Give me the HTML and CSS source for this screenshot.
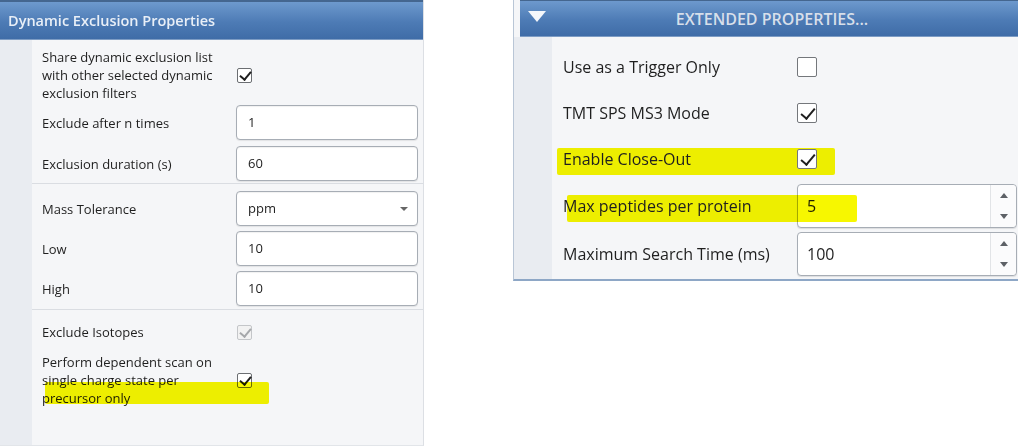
FILE: index.html
```html
<!DOCTYPE html>
<html lang="en">
<head>
  <meta charset="UTF-8" />
  <title>Dynamic Exclusion / Extended Properties</title>
  <link rel="stylesheet" href="styles.css">
</head>
<body>

  <div class="panel panel-left">
    <div class="panel-head">Dynamic Exclusion Properties</div>
    <div class="panel-body">
      <div class="strip"></div>
      <div class="content">

        <div class="section sec-1">
          <div class="row row-share">
            <label>Share dynamic exclusion list with other selected dynamic exclusion filters</label>
            <span class="check on"></span>
          </div>
          <div class="row">
            <label>Exclude after n times</label>
            <div class="field">1</div>
          </div>
          <div class="row">
            <label>Exclusion duration (s)</label>
            <div class="field">60</div>
          </div>
        </div>

        <div class="section sec-2">
          <div class="row">
            <label>Mass Tolerance</label>
            <div class="field select"><span class="sel-val">ppm</span><span class="caret"></span></div>
          </div>
          <div class="row">
            <label>Low</label>
            <div class="field">10</div>
          </div>
          <div class="row">
            <label>High</label>
            <div class="field">10</div>
          </div>
        </div>

        <div class="section sec-3">
          <div class="row row-iso">
            <label>Exclude Isotopes</label>
            <span class="check on disabled"></span>
          </div>
          <div class="row row-perform">
            <label>Perform dependent scan on single charge state per precursor only</label>
            <span class="check on"></span>
            <span class="marker mark-perform"></span>
          </div>
        </div>

      </div>
    </div>
  </div>

  <div class="panel panel-right">
    <div class="panel-head head-ext">
      <span class="tri"></span>
      <span class="head-title">EXTENDED PROPERTIES...</span>
    </div>
    <div class="panel-body">
      <div class="strip"></div>
      <div class="content">
        <div class="xrow">
          <label>Use as a Trigger Only</label>
          <span class="check big"></span>
        </div>
        <div class="xrow">
          <label>TMT SPS MS3 Mode</label>
          <span class="check big on"></span>
        </div>
        <div class="xrow">
          <span class="marker mark-close"></span>
          <label>Enable Close-Out</label>
          <span class="check big on"></span>
        </div>
        <div class="xrow spin-row">
          <span class="marker mark-max"></span>
          <label>Max peptides per protein</label>
          <div class="spin">
            <span class="spin-val">5</span>
            <span class="spin-btns"><i class="up"></i><i class="down"></i></span>
          </div>
        </div>
        <div class="xrow spin-row">
          <label>Maximum Search Time (ms)</label>
          <div class="spin">
            <span class="spin-val">100</span>
            <span class="spin-btns"><i class="up"></i><i class="down"></i></span>
          </div>
        </div>
      </div>
    </div>
  </div>

</body>
</html>
```

FILE: styles.css
```css
* { box-sizing: border-box; }
body {
  margin: 0;
  background: #fff;
  font-family: 'Open Sans', 'Noto Sans', sans-serif;
  color: #1f1f1f;
  display: flex;
  align-items: flex-start;
  width: 1022px;
  height: 448px;
  overflow: hidden;
}
.panel { background: #f5f6f8; display: flex; flex-direction: column; flex: none; }
.panel-head {
  background: linear-gradient(#6d99cd, #4d7bb5 55%, #3f6ca7);
  border-top: 2px solid #44668f;
  border-bottom: 1px solid #7d9cc4;
  color: #e9eff7;
  font-weight: 600;
}
.panel-body { display: flex; flex: 1; }
.strip { background: #e9ecf1; flex: none; }
.content { flex: 1; min-width: 0; }

/* left panel */
.panel-left {
  width: 424px;
  height: 446px;
  border-right: 1px solid #dcdfe4;
  border-bottom: 1px solid #e2e5e9;
}
.panel-left .panel-head {
  height: 40px;
  line-height: 37px;
  padding-left: 8px;
  font-size: 14.5px;
}
.panel-left .strip { width: 32px; }
.section { padding-left: 10px; }
.sec-1 { padding-top: 8px; padding-bottom: 2px; border-bottom: 1px solid #dadde2; }
.sec-2 { padding-top: 7px; padding-bottom: 3px; border-bottom: 1px solid #dadde2; }
.sec-3 { padding-top: 13px; }
.row {
  display: flex;
  align-items: center;
  position: relative;
  height: 35px;
  margin-bottom: 6px;
  font-size: 13px;
}
.sec-2 .row { margin-bottom: 5px; }
.sec-1 .row:last-child, .sec-2 .row:last-child { margin-bottom: 0; }
.row label { width: 194px; flex: none; line-height: 18px; }
.row-share { height: 54px; margin-bottom: 3px; }
.row-share label { width: 186px; margin-right: 8px; }
.row-iso { height: 18px; margin-bottom: 12px; }
.row-perform { height: 54px; }
.row-perform label { width: 186px; margin-right: 8px; }
.row .check { margin-left: 1px; }
.field {
  width: 182px;
  height: 35px;
  border: 1px solid #a7adb5;
  border-radius: 4px;
  background: #fff;
  box-shadow: inset 0 1px 1px rgba(0,0,0,0.06), 0 1px 1px rgba(0,0,0,0.08);
  padding-left: 11px;
  line-height: 33px;
  font-size: 13px;
}
.select { display: flex; justify-content: space-between; align-items: center; padding-right: 9px; }
.caret {
  width: 0; height: 0;
  border-left: 4px solid transparent;
  border-right: 4px solid transparent;
  border-top: 4px solid #666;
}

/* checkboxes */
.check {
  width: 15px;
  height: 15px;
  border: 1px solid #6b6e72;
  border-radius: 2px;
  background: #fff;
  position: relative;
  flex: none;
}
.check.on::after {
  content: '';
  position: absolute;
  left: 4px;
  top: 0px;
  width: 5px;
  height: 9px;
  border: solid #1e1e1e;
  border-width: 0 2px 2px 0;
  transform: rotate(40deg);
}
.check.disabled { border-color: #c4c6c9; background: #f2f2f2; }
.check.disabled::after { border-color: #a6a8ab; }
.check.big { width: 20px; height: 20px; border-color: #74777b; }
.check.big.on::after { left: 6px; top: 1px; width: 6px; height: 12px; }

/* highlighter marks */
.marker {
  position: absolute;
  background: #f7f700;
  mix-blend-mode: multiply;
  border-radius: 2px;
}
.mark-perform { left: 3px; top: 29px; width: 224px; height: 22px; }
.mark-close { left: -6px; top: 12px; width: 278px; height: 27px; }
.mark-max { left: 4px; top: 11px; width: 290px; height: 27px; }

/* right panel */
.panel-right {
  margin-left: 89px;
  width: 505px;
  height: 281px;
  border-left: 1px solid #b9c6d6;
  border-bottom: 2px solid #8ea7c6;
}
.head-ext {
  height: 37px;
  margin-left: 6px;
  display: flex;
  align-items: center;
  position: relative;
  border-top-width: 1px;
}
.tri {
  position: absolute;
  left: 8px;
  top: 10px;
  width: 0; height: 0;
  border-left: 9px solid transparent;
  border-right: 9px solid transparent;
  border-top: 11px solid #f4f7fb;
}
.head-title {
  flex: 1;
  text-align: center;
  font-size: 16px;
  color: #d7dfea;
  padding-left: 6px;
}
.panel-right .strip { width: 38px; }
.panel-right .content { padding: 7px 0 0 11px; }
.xrow {
  display: flex;
  align-items: center;
  position: relative;
  height: 46px;
  font-size: 16px;
}
.xrow label { width: 234px; flex: none; position: relative; }
.spin-row { height: 44px; margin-top: 2px; }
.spin-row + .spin-row { margin-top: 4px; }
.spin {
  width: 220px;
  height: 44px;
  border: 1px solid #a7adb5;
  border-radius: 4px;
  background: #fff;
  box-shadow: 0 1px 1px rgba(0,0,0,0.1);
  display: flex;
  align-items: center;
  font-size: 16px;
}
.spin-val { flex: 1; padding-left: 9px; }
.spin-btns {
  width: 26px;
  align-self: stretch;
  border-left: 1px solid #e2e4e7;
  display: flex;
  flex-direction: column;
  justify-content: space-around;
  align-items: center;
  background: #fbfbfc;
  border-radius: 0 4px 4px 0;
}
.spin-btns i { width: 0; height: 0; border-left: 4px solid transparent; border-right: 4px solid transparent; }
.spin-btns .up { border-bottom: 5px solid #5d6166; }
.spin-btns .down { border-top: 5px solid #5d6166; }
```
